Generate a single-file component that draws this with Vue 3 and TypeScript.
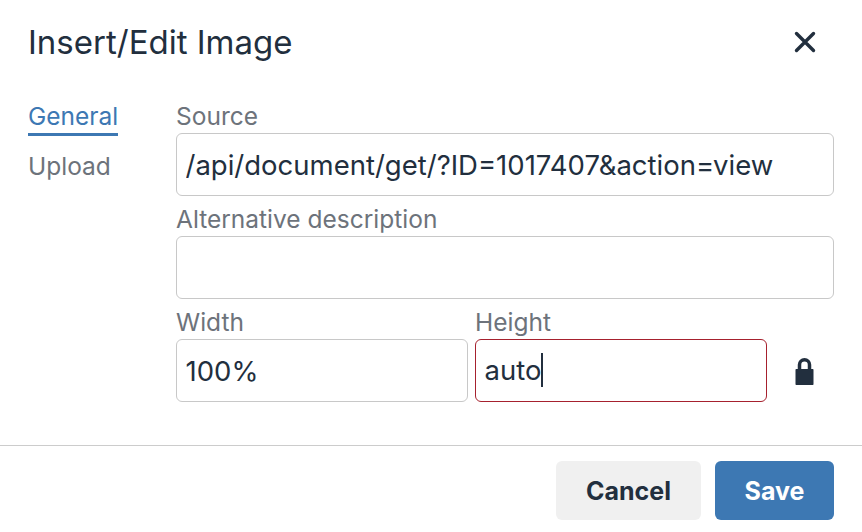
<template>
  <div class="dialog">
    <header class="dialog-header">
      <h1>Insert/Edit Image</h1>
      <button type="button" class="close" aria-label="Close">
        <svg width="24" height="24" viewBox="0 0 24 24"><path d="M3.500 3.500l17 17M20.500 3.500l-17 17" stroke="#222f3e" stroke-width="3.400" stroke-linecap="round" fill="none" /></svg>
      </button>
    </header>

    <div class="dialog-body">
      <nav class="tabs">
        <a v-for="tab in tabs" :key="tab" class="tab" :class="{ active: tab === activeTab }">{{ tab }}</a>
      </nav>

      <form class="form" @submit.prevent>
        <label class="label" for="src">Source</label>
        <input id="src" v-model="source" class="field" type="text">

        <label class="label" for="alt">Alternative description</label>
        <input id="alt" v-model="alt" class="field" type="text">

        <div class="size-row">
          <div class="size-col">
            <label class="label" for="width">Width</label>
            <input id="width" v-model="width" class="field" type="text">
          </div>
          <div class="size-col">
            <label class="label">Height</label>
            <div class="field focused">{{ height }}<span class="caret"></span></div>
          </div>
          <div class="lock">
            <svg width="19" height="27" viewBox="0 0 19 27">
              <path d="M4.500 12V6.750a5 5 0 0 1 10 0V12" fill="none" stroke="#222f3e" stroke-width="3.500" />
              <path d="M1.200 11h16.600a.7.7 0 0 1 .7.7v14.600a.7.7 0 0 1-.7.7H1.200a.7.7 0 0 1-.7-.7V11.700a.7.7 0 0 1 .7-.7z" fill="#222f3e" />
            </svg>
          </div>
        </div>
      </form>
    </div>

    <footer class="dialog-footer">
      <button type="button" class="btn btn-secondary">Cancel</button>
      <button type="button" class="btn btn-primary">Save</button>
    </footer>
  </div>
</template>

<script setup lang="ts">
import { ref } from 'vue'

const tabs = ['General', 'Upload']
const activeTab = ref('General')
const source = ref('/api/document/get/?ID=1017407&action=view')
const alt = ref('')
const width = ref('100%')
const height = ref('auto')
</script>

<style>
body {
  background: #fff;
}
</style>

<style scoped>
.dialog {
  width: 862px;
  height: 532px;
  box-sizing: border-box;
  font-family: Inter, "Noto Sans", sans-serif;
  color: #222f3e;
  background: #fff;
  overflow: hidden;
}

.dialog-header {
  display: flex;
  align-items: center;
  justify-content: space-between;
  height: 84px;
  padding: 0 28px;
}

h1 {
  margin: 0;
  font-size: 33px;
  font-weight: 400;
  line-height: 40px;
}

.close {
  display: flex;
  padding: 0;
  margin-right: 17px;
  border: 0;
  background: none;
}

.dialog-body {
  display: flex;
  height: 361px;
  padding: 0 28px;
}

.tabs {
  display: flex;
  flex-direction: column;
  width: 148px;
  align-items: flex-start;
  gap: 14px;
  padding-top: 16px;
}

.tab {
  font-size: 24.500px;
  line-height: 33px;
  color: #6d737b;
  border-bottom: 3px solid transparent;
}

.tab.active {
  color: #3d78b3;
  border-bottom-color: #3d78b3;
}

.form {
  flex: 1;
  display: flex;
  flex-direction: column;
  padding-top: 9px;
}

.label {
  display: block;
  height: 40px;
  font-size: 24.500px;
  line-height: 46px;
  color: #6d737b;
}

.field {
  display: block;
  width: 100%;
  height: 63px;
  box-sizing: border-box;
  padding: 0 8.500px;
  border: 1px solid #c8c8c8;
  border-radius: 6px;
  outline: none;
  font-family: inherit;
  font-size: 27.500px;
  line-height: 61px;
  color: #222f3e;
  background: #fff;
}

.focused {
  border-color: #a6212e;
}

.caret {
  display: inline-block;
  width: 2px;
  height: 34px;
  vertical-align: -7px;
  background: #222f3e;
}

.size-row {
  display: flex;
  gap: 7px;
}

.size-col {
  width: 292px;
}

.lock {
  flex: 1;
  display: flex;
  justify-content: center;
  align-items: flex-start;
  padding-top: 59px;
}

.dialog-footer {
  display: flex;
  justify-content: flex-end;
  gap: 14px;
  padding: 15px 28px 0;
  border-top: 1px solid #cccccc;
}

.btn {
  height: 59px;
  border: 0;
  border-radius: 6px;
  font-family: inherit;
  font-size: 25px;
  font-weight: 700;
}

.btn-secondary {
  width: 145px;
  background: #f0f0f0;
  color: #222f3e;
}

.btn-primary {
  width: 119px;
  background: #3d78b3;
  color: #fff;
}
</style>
